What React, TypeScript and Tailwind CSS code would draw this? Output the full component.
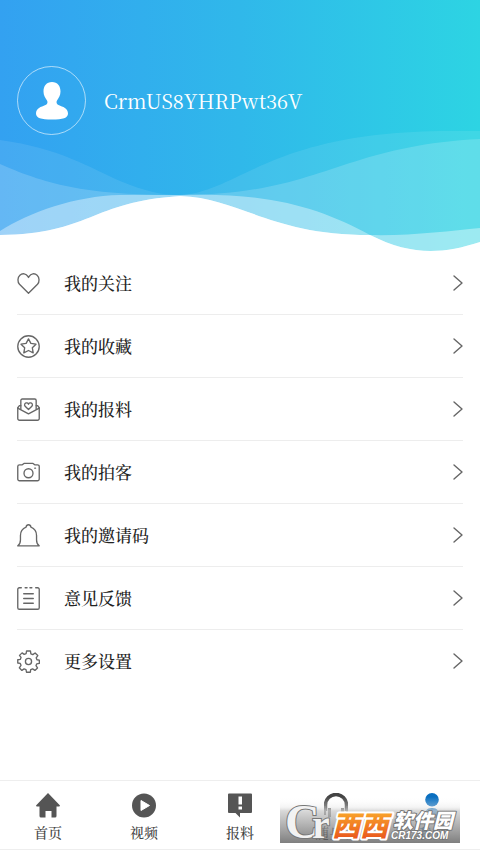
import React from 'react';

const line = {
  fill: 'none',
  stroke: '#666',
  strokeWidth: 1.4,
  strokeLinecap: 'round' as const,
  strokeLinejoin: 'round' as const,
};

const HeartIcon = () => (
  <svg viewBox="0 0 24 24" className="size-[23px]" {...line}>
    <path d="M12 22.2 2.600 12.800C.4 10.300.4 5.700 3 3.300 5.600 1 9.600 1.500 11.300 4.500L12 5.700l.7-1.200C14.400 1.500 18.400 1 21 3.300c2.600 2.400 2.600 7 .4 9.500Z" />
  </svg>
);

const StarIcon = () => (
  <svg viewBox="0 0 24 24" className="size-[23px]" {...line}>
    <circle cx="12" cy="12" r="11.200" />
    <path d="m12 4 2.500 4.800 5.300.8-3.800 3.800.9 5.300-4.900-2.500-4.900 2.500.9-5.300L4.200 9.600l5.300-.8Z" />
  </svg>
);

const MailIcon = () => (
  <svg viewBox="0 0 24 24" className="size-[23px]" {...line}>
    <path d="M4 11.500V2.500A1.500 1.500 0 0 1 5.500 1h13A1.500 1.500 0 0 1 20 2.500v9" />
    <path d="M4 8H2.500L.8 10.200V21.400A1.800 1.800 0 0 0 2.600 23.200h18.800a1.800 1.800 0 0 0 1.800-1.800V10.200L21.500 8H20" />
    <path d="m.8 10.500 11.200 6 11.200-6" />
    <path d="M12 12 8.500 8.600C7 6.800 8.500 4.600 10.500 5.100c.7.200 1.200.7 1.500 1.400.3-.7.800-1.200 1.500-1.400 2-.5 3.500 1.700 2 3.500Z" />
  </svg>
);

const CameraIcon = () => (
  <svg viewBox="0 0 24 24" className="size-[23px]" {...line}>
    <path d="M2.600 4h2.900L7.300 2.500h9.400L18.500 4h2.900a1.800 1.800 0 0 1 1.800 1.800v13a1.800 1.800 0 0 1-1.800 1.800H2.600a1.800 1.800 0 0 1-1.800-1.800v-13A1.800 1.800 0 0 1 2.600 4Z" />
    <circle cx="12" cy="12.800" r="4.700" />
    <path d="M18.500 7.500h.8" />
  </svg>
);

const BellIcon = () => (
  <svg viewBox="0 0 24 24" className="size-[23px]" {...line}>
    <path d="M.8 22.800h22.400c-2.200-1.300-2.800-3-2.800-6V12c0-4.500-2.400-7.500-5.900-8.800C14.300 1.800 13.300.8 12 .8s-2.300 1-2.500 2.400C6 4.500 3.600 7.500 3.600 12v4.800c0 3-.6 4.700-2.800 6Z" />
  </svg>
);

const NoteIcon = () => (
  <svg viewBox="0 0 24 24" className="size-[23px]" {...line}>
    <path d="M4.500.8H2.400A1.600 1.600 0 0 0 .8 2.400v19.200a1.600 1.600 0 0 0 1.600 1.600h19.200a1.600 1.600 0 0 0 1.600-1.600V2.400A1.600 1.600 0 0 0 21.600.8h-2.100M8.500.8H10.500M13.500.8h2" />
    <path d="M7 7h10M7 12h10M7 17h10" />
  </svg>
);

const GearIcon = () => (
  <svg viewBox="0 0 24 24" className="size-[23px]" {...line}>
    <circle cx="12" cy="12" r="3.200" />
    <path d="M10 1h4l.5 3 2 .8L18.900 3.100l2.800 2.700L20 8.200l.8 2 2.500.4v3.400l-2.700.4-.8 2 1.600 2.300-2.700 2.600-2.400-1.600-2 .8-.4 2.700h-4l-.5-2.700-2-.8-2.300 1.600-2.700-2.700L4.200 16l-.8-2L.8 13.600v-3.400l2.600-.4.8-2-1.600-2.200 2.700-2.600 2.200 1.600 2-.8Z" />
  </svg>
);

const HomeIcon = () => (
  <svg viewBox="0 0 24 25" className="h-[25px] w-6" fill="#555">
    <path d="M12 0 24 12.500 23.400 13.500H20.500V23a1.500 1.500 0 0 1-1.500 1.500h-3.500V18h-6v6.500H5A1.500 1.500 0 0 1 3.500 23v-9.500H.6L0 12.500Z" />
  </svg>
);

const VideoIcon = () => (
  <svg viewBox="0 0 24 25" className="h-[25px] w-6">
    <circle cx="12" cy="12.500" r="12" fill="#555" />
    <path d="M9 7.500v10L17.500 12.500Z" fill="#fff" stroke="#fff" strokeLinejoin="round" />
  </svg>
);

const ReportIcon = () => (
  <svg viewBox="0 0 24 25" className="h-[25px] w-6">
    <path d="M1 .5h22a1 1 0 0 1 1 1v17.500a1 1 0 0 1-1 1H12V24.500L7.500 20H1a1 1 0 0 1-1-1v-17.500a1 1 0 0 1 1-1Z" fill="#555" />
    <path d="M10.500 3.500h3.500v8h-3.500zM10.500 13.500h3.500v3h-3.500z" fill="#fff" />
  </svg>
);

const HeadphoneIcon = () => (
  <svg viewBox="0 0 24 25" className="h-[25px] w-6">
    <path d="M1.500 18v-6a10.500 10.500 0 0 1 21 0v6" fill="none" stroke="#444" strokeWidth="3.500" />
    <path d="M0 13h2v9H0zM4 15h3v9H4zM17 15h3v9h-3zM22 13h2v9h-2z" fill="#555" />
  </svg>
);

const MeIcon = () => (
  <svg viewBox="0 0 24 25" className="h-[25px] w-6" fill="#0a6fc0">
    <circle cx="12" cy="6.800" r="6.800" />
    <path d="M4 25c0-7 3-10 8-10s8 3 8 10Z" />
  </svg>
);

const menu = [
  { label: '我的关注', Icon: HeartIcon },
  { label: '我的收藏', Icon: StarIcon },
  { label: '我的报料', Icon: MailIcon },
  { label: '我的拍客', Icon: CameraIcon },
  { label: '我的邀请码', Icon: BellIcon },
  { label: '意见反馈', Icon: NoteIcon },
  { label: '更多设置', Icon: GearIcon },
];

const tabs = [
  { label: '首页', Icon: HomeIcon, active: false },
  { label: '视频', Icon: VideoIcon, active: false },
  { label: '报料', Icon: ReportIcon, active: false },
  { label: '随身听', Icon: HeadphoneIcon, active: false },
  { label: '我的', Icon: MeIcon, active: true },
];

const Waves = () => (
  <svg viewBox="0 0 480 252" preserveAspectRatio="none" className="absolute inset-0 size-full" fill="#fff">
    <path opacity=".09" d="M0 140C60 148 90 168 120 181C145 191 160 195 180 195C240 192 270 131 450 131L480 131V252H0Z" />
    <path opacity=".17" d="M0 164C50 186 90 195 180 195C320 195 340 146 480 139V252H0Z" />
    <path opacity=".38" d="M0 231C30 212 75 196 120 195H180C270 192 320 208 370 235C410 255 440 255 480 242V252H0Z" />
    <path opacity=".38" d="M0 235C90 234 90 202 180 196C240 198 270 235 370 235C410 236 450 231 480 228V252H0Z" />
    <path d="M0 235C90 234 90 202 180 196C240 198 270 235 370 235C410 255 440 255 480 242V252H0Z" />
  </svg>
);

// site stamp over the right end of the tab bar
const Watermark = () => (
  <svg viewBox="0 0 180 46" className="pointer-events-none absolute right-5 bottom-[6px] h-[46px] w-[180px] overflow-visible">
    <defs>
      <linearGradient id="shade" x2="0" y2="1">
        <stop offset="0" stopColor="#fff" stopOpacity="0" />
        <stop offset=".22" stopColor="#e4e4e4" stopOpacity=".4" />
        <stop offset=".3" stopColor="#ccc" stopOpacity=".75" />
        <stop offset="1" stopColor="#555" stopOpacity=".75" />
      </linearGradient>
      <linearGradient id="orange" x2="0" y2="1">
        <stop offset=".2" stopColor="#f9a52b" />
        <stop offset="1" stopColor="#e6481a" />
      </linearGradient>
    </defs>
    <rect width="180" height="46" fill="url(#shade)" />
    <g fontFamily="Liberation Serif, serif" fill="#f2f2f2" stroke="#777" strokeWidth="2" paintOrder="stroke">
      <text x="5" y="41" fontSize="48" fontWeight="700">C</text>
      <text x="32" y="41" fontSize="40" fontWeight="700">r</text>
    </g>
    <g fontFamily="Noto Sans CJK SC, sans-serif" fontStyle="italic" fontWeight="900" paintOrder="stroke" strokeLinejoin="round">
      <text x="52" y="39" fontSize="28" fill="url(#orange)" stroke="#fff" strokeWidth="4">西西</text>
      <text x="113" y="31" fontSize="20" fill="#fff" stroke="#777" strokeWidth="2">软件园</text>
    </g>
    <text x="111" y="42" fontSize="10" fontFamily="Liberation Sans, sans-serif" fontStyle="italic" fontWeight="700" fill="#fff" stroke="#777" strokeWidth="1.500" paintOrder="stroke">CR173.COM</text>
  </svg>
);

export default function App() {
  return (
    <div className="flex min-h-screen flex-col bg-white font-['Noto_Serif_CJK_SC','Liberation_Serif','Noto_Sans_CJK_SC',serif] text-[#222]">
      <header className="relative bg-linear-to-r from-[#33a1f1] via-[#30b8ea] to-[#2dd4e3] px-[17px] pt-[66px] pb-[117px]">
        <Waves />
        <div className="relative flex items-center gap-[18px]">
          <div className="flex size-[69px] items-center justify-center rounded-full border border-white/60">
            <svg viewBox="0 0 32 38" className="h-[38px] w-8" fill="#fff">
              <path d="M16 0c5.500 0 8.500 4 8.500 9.500 0 4-1.800 6.500-3.500 9-1 1.800-.5 3.500 1.500 4.500C27 25 32 26 32 31.500 32 36 27 37.500 16 37.500S0 36 0 31.500C0 26 5 25 9.500 23c2-1 2.500-2.700 1.500-4.500-1.700-2.500-3.500-5-3.500-9C7.500 4 10.500 0 16 0Z" />
            </svg>
          </div>
          <h1 className="text-xl text-white">CrmUS8YHRPwt36V</h1>
        </div>
      </header>

      <ul className="divide-y divide-[#ededed] px-[17px]">
        {menu.map(({ label, Icon }) => (
          <li key={label}>
            <button className="flex h-[62px] w-full items-center gap-6 text-left">
              <Icon />
              <span className="flex-1 text-[17px] font-medium">{label}</span>
              <svg viewBox="0 0 10 16" className="h-4 w-[10px]" {...line}>
                <path d="m1 1 8 7-8 7" />
              </svg>
            </button>
          </li>
        ))}
      </ul>

      <nav className="relative mt-auto mb-[3px] grid grid-cols-5 border-y border-[#eee]">
        {tabs.map(({ label, Icon, active }) => (
          <button key={label} className="flex h-[68px] flex-col items-center gap-1 pt-3">
            <Icon />
            <span className={active ? 'text-sm font-medium text-[#0a6fc0]' : 'text-sm font-medium text-[#444]'}>{label}</span>
          </button>
        ))}
        <Watermark />
      </nav>
    </div>
  );
}
